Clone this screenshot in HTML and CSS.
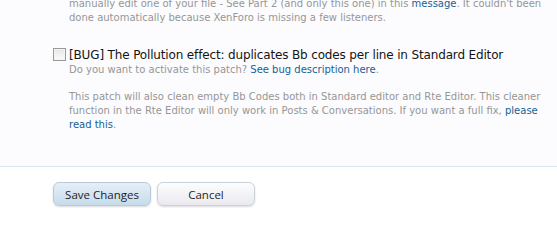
FILE: index.html
```html
<!DOCTYPE html>
<html>
<head>
<meta charset="utf-8">
<link rel="stylesheet" href="styles.css">
</head>
<body>
<div class="panel">
  <p class="note lead">manually edit one of your file - See Part 2 (and only this one) in this <a href="#">message</a>. It couldn't been done automatically because XenForo is missing a few listeners.</p>
  <div class="option">
    <label class="title"><span class="box"></span>[BUG] The Pollution effect: duplicates Bb codes per line in Standard Editor</label>
    <p class="note">Do you want to activate this patch? <a href="#">See bug description here</a>.</p>
    <p class="note para">This patch will also clean empty Bb Codes both in Standard editor and Rte Editor. This cleaner function in the Rte Editor will only work in Posts &amp; Conversations. If you want a full fix, <a href="#">please read this</a>.</p>
  </div>
</div>
<div class="actions">
  <button class="btn primary">Save Changes</button>
  <button class="btn">Cancel</button>
</div>
</body>
</html>
```
FILE: styles.css
```css
html, body {
  margin: 0;
  padding: 0;
  background: #ffffff;
}
body {
  width: 557px;
  height: 236px;
  overflow: hidden;
  font-family: "DejaVu Sans", sans-serif;
}
.panel {
  background: #fcfcfe;
  height: 169px;
  border-bottom: 1px solid #d8e6f1;
  padding-left: 69px;
  padding-right: 14px;
}
.note {
  margin: 0;
  font-size: 10px;
  line-height: 14px;
  color: #969696;
}
.note a {
  color: #176093;
  text-decoration: none;
}
.lead {
  margin-top: -3px;
}
.option {
  margin-top: 22px;
}
.title {
  position: relative;
  display: block;
  font-size: 12px;
  letter-spacing: -0.15px;
  line-height: 16px;
  color: #141414;
}
.box {
  position: absolute;
  left: -16px;
  top: 1px;
  width: 11px;
  height: 11px;
  border: 1px solid #9a9a9a;
  background: linear-gradient(#e6e6e6, #fbfbfb);
  box-shadow: inset 0 0 0 1px #f4f4f4;
}
.para {
  margin-top: 13px;
}
.actions {
  display: flex;
  gap: 6px;
  padding: 15px 0 0 53px;
}
.btn {
  width: 98px;
  height: 24px;
  border: 1px solid #c9d3dc;
  border-radius: 6px;
  font-family: "Open Sans", sans-serif;
  font-size: 11.5px;
  color: #1e1e1e;
  background: linear-gradient(#fdfdfe, #e9e9ef);
  box-shadow: 0 1px 2px rgba(0,0,0,0.15);
  padding: 0;
}
.btn.primary {
  background: linear-gradient(#e6eff7, #c6dbeb);
  border-color: #b9cbdb;
}
```
